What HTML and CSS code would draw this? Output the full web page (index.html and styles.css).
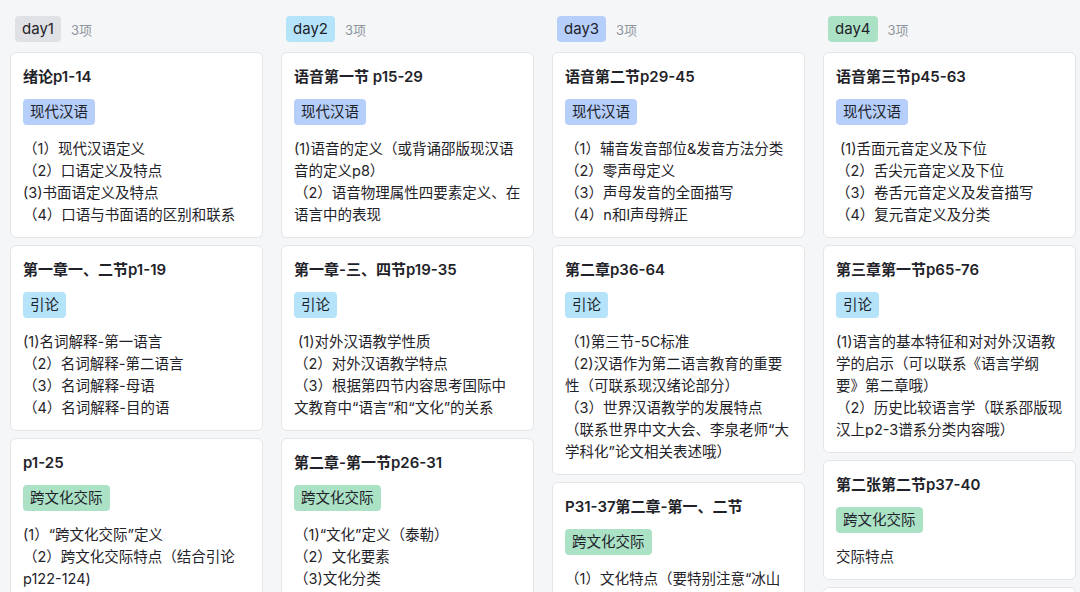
FILE: index.html
```html
<!DOCTYPE html>
<html lang="zh-CN">
<head>
    <meta charset="UTF-8">
    <title>复习计划看板</title>
    <link rel="stylesheet" href="styles.css">
</head>

<body>
    <div class="board">
        <!-- day1 -->
        <section class="column">
            <div class="column-head">
                <span class="group-tag gray">day1</span>
                <span class="count">3项</span>
            </div>
            <div class="card">
                <div class="card-title">绪论p1-14</div>
                <span class="tag blue">现代汉语</span>
                <div class="card-body">
                    （1）现代汉语定义<br>
                    （2）口语定义及特点<br>
                    (3)书面语定义及特点<br>
                    （4）口语与书面语的区别和联系
                </div>
            </div>
            <div class="card">
                <div class="card-title">第一章一、二节p1-19</div>
                <span class="tag cyan">引论</span>
                <div class="card-body">
                    (1)名词解释-第一语言<br>
                    （2）名词解释-第二语言<br>
                    （3）名词解释-母语<br>
                    （4）名词解释-目的语
                </div>
            </div>
            <div class="card">
                <div class="card-title">p1-25</div>
                <span class="tag green">跨文化交际</span>
                <div class="card-body">
                    (1）“跨文化交际”定义<br>
                    （2）跨文化交际特点（结合引论<br>
                    p122-124)
                </div>
            </div>
        </section>

        <!-- day2 -->
        <section class="column">
            <div class="column-head">
                <span class="group-tag cyan">day2</span>
                <span class="count">3项</span>
            </div>
            <div class="card">
                <div class="card-title">语音第一节 p15-29</div>
                <span class="tag blue">现代汉语</span>
                <div class="card-body">
                    (1)语音的定义（或背诵邵版现汉语<br>
                    音的定义p8）<br>
                    （2）语音物理属性四要素定义、在<br>
                    语言中的表现
                </div>
            </div>
            <div class="card">
                <div class="card-title">第一章-三、四节p19-35</div>
                <span class="tag cyan">引论</span>
                <div class="card-body">
                    &nbsp;(1)对外汉语教学性质<br>
                    （2）对外汉语教学特点<br>
                    （3）根据第四节内容思考国际中<br>
                    文教育中“语言”和“文化”的关系
                </div>
            </div>
            <div class="card">
                <div class="card-title">第二章-第一节p26-31</div>
                <span class="tag green">跨文化交际</span>
                <div class="card-body">
                    （1)“文化”定义（泰勒）<br>
                    （2）文化要素<br>
                    （3)文化分类
                </div>
            </div>
        </section>

        <!-- day3 -->
        <section class="column">
            <div class="column-head">
                <span class="group-tag blue">day3</span>
                <span class="count">3项</span>
            </div>
            <div class="card">
                <div class="card-title">语音第二节p29-45</div>
                <span class="tag blue">现代汉语</span>
                <div class="card-body">
                    （1）辅音发音部位&amp;发音方法分类<br>
                    （2）零声母定义<br>
                    （3）声母发音的全面描写<br>
                    （4）n和l声母辨正
                </div>
            </div>
            <div class="card">
                <div class="card-title">第二章p36-64</div>
                <span class="tag cyan">引论</span>
                <div class="card-body">
                    （1)第三节-5C标准<br>
                    （2)汉语作为第二语言教育的重要<br>
                    性（可联系现汉绪论部分）<br>
                    （3）世界汉语教学的发展特点<br>
                    （联系世界中文大会、李泉老师“大<br>
                    学科化”论文相关表述哦）
                </div>
            </div>
            <div class="card">
                <div class="card-title">P31-37第二章-第一、二节</div>
                <span class="tag green">跨文化交际</span>
                <div class="card-body">
                    （1）文化特点（要特别注意“冰山
                </div>
            </div>
        </section>

        <!-- day4 -->
        <section class="column">
            <div class="column-head">
                <span class="group-tag green">day4</span>
                <span class="count">3项</span>
            </div>
            <div class="card">
                <div class="card-title">语音第三节p45-63</div>
                <span class="tag blue">现代汉语</span>
                <div class="card-body">
                    &nbsp;(1)舌面元音定义及下位<br>
                    （2）舌尖元音定义及下位<br>
                    （3）卷舌元音定义及发音描写<br>
                    （4）复元音定义及分类
                </div>
            </div>
            <div class="card">
                <div class="card-title">第三章第一节p65-76</div>
                <span class="tag cyan">引论</span>
                <div class="card-body">
                    (1)语言的基本特征和对对外汉语教<br>
                    学的启示（可以联系《语言学纲<br>
                    要》第二章哦）<br>
                    （2）历史比较语言学（联系邵版现<br>
                    汉上p2-3谱系分类内容哦）
                </div>
            </div>
            <div class="card">
                <div class="card-title">第二张第二节p37-40</div>
                <span class="tag green">跨文化交际</span>
                <div class="card-body">
                    交际特点
                </div>
            </div>
            <div class="card card-empty"></div>
        </section>
    </div>
</body>
</html>
```

FILE: styles.css
```css
html,
body {
    height: 100%;
    overflow: hidden;
}

body {
    margin: 0;
    padding: 0;
    background: #f5f6f7;
    color: #1f2329;
    font-family: Inter, "Noto Sans CJK SC", sans-serif;
}

.board {
    display: flex;
    align-items: flex-start;
    gap: 18px;
    padding: 16px 0 0 10px;
}

.column {
    width: 253px;
    flex-shrink: 0;
    display: flex;
    flex-direction: column;
    gap: 7px;
}

.column-head {
    display: flex;
    align-items: center;
    gap: 10px;
    height: 26px;
    padding-left: 5px;
    margin-bottom: 3px;
}

.group-tag {
    height: 26px;
    line-height: 26px;
    padding: 0 7px;
    border-radius: 4px;
    font-size: 15px;
}

.count {
    font-size: 13px;
    color: #8f959e;
}

.card {
    display: flex;
    flex-direction: column;
    align-items: flex-start;
    background: #fff;
    border: 1px solid #e3e5e8;
    border-radius: 6px;
    padding: 13px 8px 11px 12px;
}

.card-empty {
    height: 60px;
}

.card-title {
    font-size: 15px;
    font-weight: 600;
    line-height: 22px;
    margin-bottom: 11px;
}

.tag {
    height: 26px;
    line-height: 26px;
    padding: 0 7px;
    border-radius: 4px;
    font-size: 14.5px;
    margin-bottom: 13px;
}

.card-body {
    font-size: 14.5px;
    line-height: 22px;
}

/* option colours */
.gray {
    background: #dfe1e4;
}

.blue {
    background: #b5cffa;
}

.cyan {
    background: #b4e3fa;
}

.green {
    background: #abe2c6;
}
```
